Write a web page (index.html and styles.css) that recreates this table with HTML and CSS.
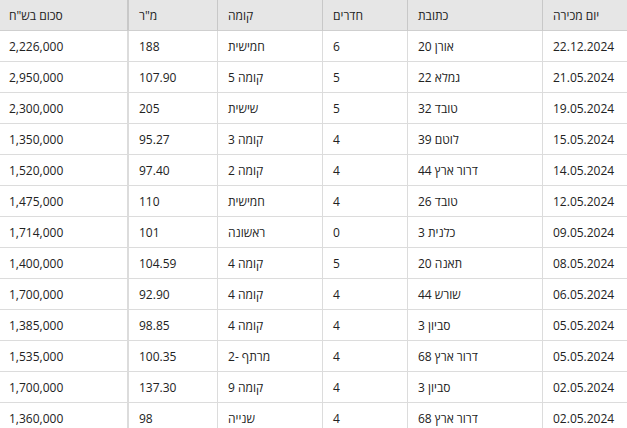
FILE: index.html
```html
<!DOCTYPE html>
<html lang="he" dir="rtl">
<head>
<meta charset="utf-8">
<title>מכירות</title>
<link rel="stylesheet" href="styles.css">
</head>
<body>
<div class="grid" role="table">
  <div class="row head" role="row">
    <div class="cell" role="columnheader">יום מכירה</div>
    <div class="cell" role="columnheader">כתובת</div>
    <div class="cell" role="columnheader">חדרים</div>
    <div class="cell" role="columnheader">קומה</div>
    <div class="cell c-area" role="columnheader">מ"ר</div>
    <div class="cell c-last" role="columnheader">סכום בש"ח</div>
  </div>
  <div class="row" role="row"><div class="cell">22.12.2024</div><div class="cell">אורן 20</div><div class="cell">6</div><div class="cell">חמישית</div><div class="cell c-area">188</div><div class="cell c-last">2,226,000</div></div>
  <div class="row" role="row"><div class="cell">21.05.2024</div><div class="cell">גמלא 22</div><div class="cell">5</div><div class="cell">קומה 5</div><div class="cell c-area">107.90</div><div class="cell c-last">2,950,000</div></div>
  <div class="row" role="row"><div class="cell">19.05.2024</div><div class="cell">טובד 32</div><div class="cell">5</div><div class="cell">שישית</div><div class="cell c-area">205</div><div class="cell c-last">2,300,000</div></div>
  <div class="row" role="row"><div class="cell">15.05.2024</div><div class="cell">לוטם 39</div><div class="cell">4</div><div class="cell">קומה 3</div><div class="cell c-area">95.27</div><div class="cell c-last">1,350,000</div></div>
  <div class="row" role="row"><div class="cell">14.05.2024</div><div class="cell">דרור ארץ 44</div><div class="cell">4</div><div class="cell">קומה 2</div><div class="cell c-area">97.40</div><div class="cell c-last">1,520,000</div></div>
  <div class="row" role="row"><div class="cell">12.05.2024</div><div class="cell">טובד 26</div><div class="cell">4</div><div class="cell">חמישית</div><div class="cell c-area">110</div><div class="cell c-last">1,475,000</div></div>
  <div class="row" role="row"><div class="cell">09.05.2024</div><div class="cell">כלנית 3</div><div class="cell">0</div><div class="cell">ראשונה</div><div class="cell c-area">101</div><div class="cell c-last">1,714,000</div></div>
  <div class="row" role="row"><div class="cell">08.05.2024</div><div class="cell">תאנה 20</div><div class="cell">5</div><div class="cell">קומה 4</div><div class="cell c-area">104.59</div><div class="cell c-last">1,400,000</div></div>
  <div class="row" role="row"><div class="cell">06.05.2024</div><div class="cell">שורש 44</div><div class="cell">4</div><div class="cell">קומה 4</div><div class="cell c-area">92.90</div><div class="cell c-last">1,700,000</div></div>
  <div class="row" role="row"><div class="cell">05.05.2024</div><div class="cell">סביון 3</div><div class="cell">4</div><div class="cell">קומה 4</div><div class="cell c-area">98.85</div><div class="cell c-last">1,385,000</div></div>
  <div class="row" role="row"><div class="cell">05.05.2024</div><div class="cell">דרור ארץ 68</div><div class="cell">4</div><div class="cell">מרתף -2</div><div class="cell c-area">100.35</div><div class="cell c-last">1,535,000</div></div>
  <div class="row" role="row"><div class="cell">02.05.2024</div><div class="cell">סביון 3</div><div class="cell">4</div><div class="cell">קומה 9</div><div class="cell c-area">137.30</div><div class="cell c-last">1,700,000</div></div>
  <div class="row" role="row"><div class="cell">02.05.2024</div><div class="cell">דרור ארץ 68</div><div class="cell">4</div><div class="cell">שנייה</div><div class="cell c-area">98</div><div class="cell c-last">1,360,000</div></div>
</div>
</body>
</html>
```
FILE: styles.css
```css
html, body {
  margin: 0;
  padding: 0;
  background: #ffffff;
}
body {
  font-family: "Open Sans", "DejaVu Sans", sans-serif;
  font-size: 12px;
  color: #222222;
  overflow: hidden;
}
.grid {
  display: grid;
  direction: rtl;
  grid-template-columns: 85px 135px 85px 105px 90px 127px;
  width: 627px;
}
.row {
  display: contents;
}
.cell {
  box-sizing: border-box;
  height: 31px;
  padding: 0 0 0 10px;
  display: flex;
  align-items: center;
  justify-content: flex-end;
  text-align: left;
  border-bottom: 1px solid #dcdcdc;
  border-left: 1px solid #dcdcdc;
  white-space: nowrap;
}
.cell.c-area {
  border-left-width: 2px;
}
.cell.c-last {
  border-left: 0;
  padding-left: 9px;
}
.head .cell {
  background: #e6e6e6;
  border-bottom-color: #cfcfcf;
  border-left-color: #c8c8c8;
}
```
